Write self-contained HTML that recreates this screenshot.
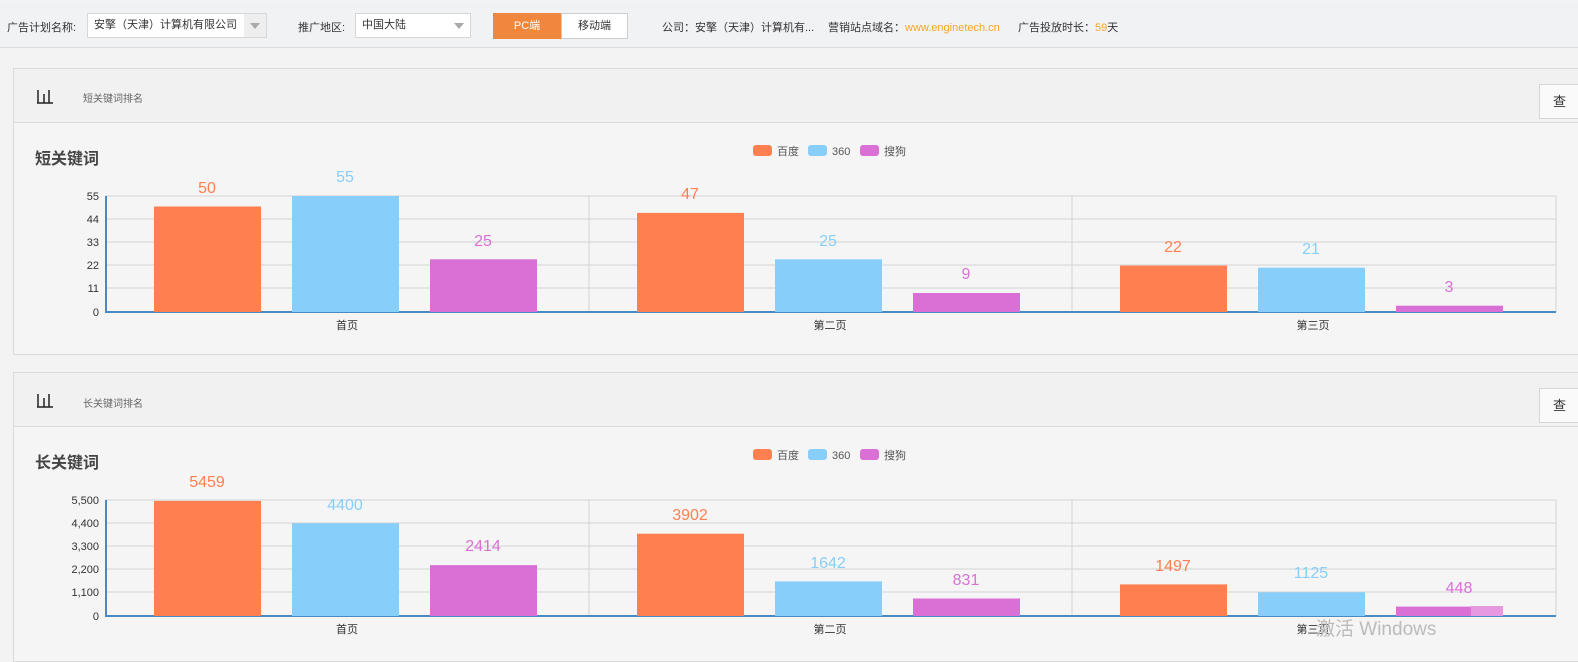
<!DOCTYPE html>
<html><head><meta charset="utf-8"><style>
*{margin:0;padding:0;box-sizing:border-box}
body{width:1578px;height:651px;overflow:hidden;background:#f3f3f4;font-family:"Liberation Sans","Noto Sans CJK SC",sans-serif;font-size:11px;color:#333;position:relative}
.top{position:absolute;left:0;top:3px;width:1578px;height:45px;background:#f1f2f4;border-bottom:1px solid #ddd}
.a{position:absolute;white-space:nowrap}
.sel{position:absolute;height:25px;border:1px solid #d6d6d6;background:#fff;font-size:11px;line-height:23px;padding-left:6px;overflow:hidden;white-space:nowrap}
.sel .ar{position:absolute;right:0;top:0;width:22px;height:23px;background:#eee;}
.sel .ar:after{content:"";position:absolute;left:6px;top:9px;border:5px solid transparent;border-top:6px solid #aaa}
.panel{position:absolute;left:13px;width:1580px;border:1px solid #d9d9d9;background:#f5f5f5}
.ph{height:54px;background:#f1f1f1;border-bottom:1px solid #d9d9d9;position:relative}
.btn{position:absolute;left:1525px;top:15px;width:40px;height:35px;border:1px solid #d6d6d6;background:#fafafa;font-size:13px;line-height:33px;padding-left:13px}
svg{position:absolute;left:0;top:0}
</style></head><body>
<div class="top"></div>
<div class="a" style="left:7px;top:19px">广告计划名称:</div>
<div class="sel" style="left:87px;top:13px;width:180px"><span style="display:inline-block;width:150px;overflow:hidden">安擎（天津）计算机有限公司</span><div class="ar"></div></div>
<div class="a" style="left:298px;top:19px">推广地区:</div>
<div class="sel" style="left:355px;top:13px;width:116px">中国大陆<div class="ar" style="background:#fff"></div></div>
<div class="a" style="left:493px;top:13px;width:68px;height:26px;background:#f0873f;color:#fff;text-align:center;line-height:26px;font-size:11px">PC端</div>
<div class="a" style="left:561px;top:13px;width:67px;height:26px;background:#fff;border:1px solid #ccc;text-align:center;line-height:24px;font-size:11px">移动端</div>
<div class="a" style="left:662px;top:19px;font-size:11px">公司：安擎（天津）计算机有...</div>
<div class="a" style="left:828px;top:19px;font-size:11px">营销站点域名：<span style="color:#f5a623">www.enginetech.cn</span></div>
<div class="a" style="left:1018px;top:19px;font-size:11px">广告投放时长：<span style="color:#f5a623">59</span>天</div>

<div class="panel" style="top:68px;height:287px"><div class="ph"><div class="btn">查</div></div></div>
<div class="panel" style="top:372px;height:290px"><div class="ph"><div class="btn">查</div></div></div>
<div class="a" style="left:83px;top:90px;font-size:10px;color:#666">短关键词排名</div>
<div class="a" style="left:83px;top:395px;font-size:10px;color:#666">长关键词排名</div>
<div class="a" style="left:35px;top:145px;font-size:16px;font-weight:bold;color:#444">短关键词</div>
<div class="a" style="left:35px;top:449px;font-size:16px;font-weight:bold;color:#444">长关键词</div>

<svg width="1578" height="651" font-family="Liberation Sans,Noto Sans CJK SC,sans-serif">
<g stroke="#222" stroke-width="1.5" fill="none">
<path d="M38 90v13M44 94v9M49 90v13M37 103h16"/>
<path d="M38 394v13M44 398v9M49 394v13M37 407h16"/>
</g>
<g>
<rect x="753" y="145" width="19" height="11" rx="3" fill="#ff7f50"/><text x="777" y="155" font-size="11" fill="#555">百度</text>
<rect x="808" y="145" width="19" height="11" rx="3" fill="#87cefa"/><text x="832" y="155" font-size="11" fill="#555">360</text>
<rect x="860" y="145" width="19" height="11" rx="3" fill="#da70d6"/><text x="884" y="155" font-size="11" fill="#555">搜狗</text>
<g stroke="#d4d4d4" fill="none"><rect x="106" y="196" width="1450" height="116"/>
<line x1="106" x2="1556" y1="219" y2="219"/><line x1="106" x2="1556" y1="242" y2="242"/><line x1="106" x2="1556" y1="265" y2="265"/><line x1="106" x2="1556" y1="288" y2="288"/>
<line x1="589" x2="589" y1="196" y2="312"/><line x1="1072" x2="1072" y1="196" y2="312"/></g>
<line x1="106" x2="106" y1="196" y2="313" stroke="#4a8ac4" stroke-width="2"/><line x1="105" x2="1556" y1="312" y2="312" stroke="#4a8ac4" stroke-width="2"/>
<g font-size="11" fill="#333" text-anchor="end"><text x="99" y="200">55</text><text x="99" y="223">44</text><text x="99" y="246">33</text><text x="99" y="269">22</text><text x="99" y="292">11</text><text x="99" y="316">0</text></g>
<g font-size="11" fill="#333" text-anchor="middle"><text x="347" y="329">首页</text><text x="830" y="329">第二页</text><text x="1313" y="329">第三页</text></g>
<rect x="154" y="206.5" width="107" height="105.5" fill="#ff7f50"/><rect x="292" y="196" width="107" height="116" fill="#87cefa"/><rect x="430" y="259.3" width="107" height="52.7" fill="#da70d6"/>
<rect x="637" y="212.9" width="107" height="99.1" fill="#ff7f50"/><rect x="775" y="259.3" width="107" height="52.7" fill="#87cefa"/><rect x="913" y="293" width="107" height="19" fill="#da70d6"/>
<rect x="1120" y="265.6" width="107" height="46.4" fill="#ff7f50"/><rect x="1258" y="267.7" width="107" height="44.3" fill="#87cefa"/><rect x="1396" y="305.7" width="107" height="6.3" fill="#da70d6"/>
<g font-size="16" text-anchor="middle"><text x="207" y="193" fill="#ff7f50">50</text><text x="345" y="182" fill="#87cefa">55</text><text x="483" y="246" fill="#da70d6">25</text>
<text x="690" y="199" fill="#ff7f50">47</text><text x="828" y="246" fill="#87cefa">25</text><text x="966" y="279" fill="#da70d6">9</text>
<text x="1173" y="252" fill="#ff7f50">22</text><text x="1311" y="254" fill="#87cefa">21</text><text x="1449" y="292" fill="#da70d6">3</text></g>
</g>
<g>
<rect x="753" y="449" width="19" height="11" rx="3" fill="#ff7f50"/><text x="777" y="459" font-size="11" fill="#555">百度</text>
<rect x="808" y="449" width="19" height="11" rx="3" fill="#87cefa"/><text x="832" y="459" font-size="11" fill="#555">360</text>
<rect x="860" y="449" width="19" height="11" rx="3" fill="#da70d6"/><text x="884" y="459" font-size="11" fill="#555">搜狗</text>
<g stroke="#d4d4d4" fill="none"><rect x="106" y="500" width="1450" height="116"/>
<line x1="106" x2="1556" y1="523" y2="523"/><line x1="106" x2="1556" y1="546" y2="546"/><line x1="106" x2="1556" y1="569" y2="569"/><line x1="106" x2="1556" y1="592" y2="592"/>
<line x1="589" x2="589" y1="500" y2="616"/><line x1="1072" x2="1072" y1="500" y2="616"/></g>
<line x1="106" x2="106" y1="500" y2="617" stroke="#4a8ac4" stroke-width="2"/><line x1="105" x2="1556" y1="616" y2="616" stroke="#4a8ac4" stroke-width="2"/>
<g font-size="11" fill="#333" text-anchor="end"><text x="99" y="504">5,500</text><text x="99" y="527">4,400</text><text x="99" y="550">3,300</text><text x="99" y="573">2,200</text><text x="99" y="596">1,100</text><text x="99" y="620">0</text></g>
<g font-size="11" fill="#333" text-anchor="middle"><text x="347" y="633">首页</text><text x="830" y="633">第二页</text><text x="1313" y="633">第三页</text></g>
<rect x="154" y="500.9" width="107" height="115.1" fill="#ff7f50"/><rect x="292" y="523.2" width="107" height="92.8" fill="#87cefa"/><rect x="430" y="565.1" width="107" height="50.9" fill="#da70d6"/>
<rect x="637" y="533.7" width="107" height="82.3" fill="#ff7f50"/><rect x="775" y="581.4" width="107" height="34.6" fill="#87cefa"/><rect x="913" y="598.5" width="107" height="17.5" fill="#da70d6"/>
<rect x="1120" y="584.4" width="107" height="31.6" fill="#ff7f50"/><rect x="1258" y="592.3" width="107" height="23.7" fill="#87cefa"/><rect x="1396" y="606.6" width="107" height="9.4" fill="#da70d6"/><rect x="1471" y="606" width="32" height="10" fill="#e699df"/>
<g font-size="16" text-anchor="middle"><text x="207" y="487" fill="#ff7f50">5459</text><text x="345" y="510" fill="#87cefa">4400</text><text x="483" y="551" fill="#da70d6">2414</text>
<text x="690" y="520" fill="#ff7f50">3902</text><text x="828" y="568" fill="#87cefa">1642</text><text x="966" y="585" fill="#da70d6">831</text>
<text x="1173" y="571" fill="#ff7f50">1497</text><text x="1311" y="578" fill="#87cefa">1125</text><text x="1459" y="593" fill="#da70d6">448</text></g>
</g>
<text x="1316" y="635" font-size="19" fill="#bbb">激活 Windows</text>
</svg>
</body></html>
